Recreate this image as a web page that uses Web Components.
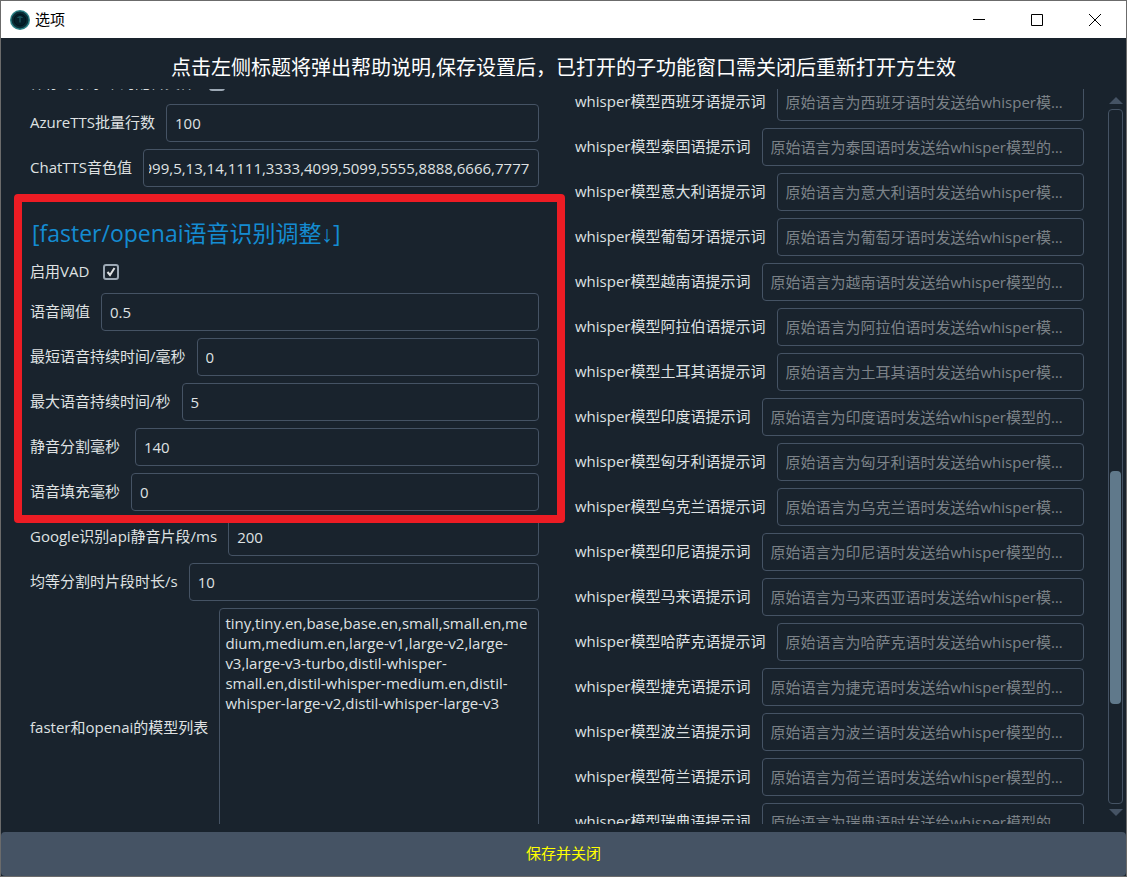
<!DOCTYPE html>
<html lang="zh-CN">
<head>
<meta charset="utf-8">
<title>选项</title>
<style>
  html, body {
    height: 100%;
    margin: 0;
  }
  body {
    --bg: #19232d;
    --line: #455364;
    --text: #dfe1e2;
    --muted: #7c8288;
    --accent: #148cd2;
    font: 15px/20px "Open Sans", "Liberation Sans", "Noto Sans CJK SC", sans-serif;
    color: var(--text);
    background: var(--bg);
  }
</style>
</head>
<body>

<option-window title-text="选项">
  <option-scroll>
    <option-column style="--skip: 20px">
      <option-check label="保存每条字幕的配音文件"></option-check>
      <option-field label="AzureTTS批量行数" value="100"></option-field>
      <option-field label="ChatTTS音色值" value="11,12,16,2222,4444,6653,7869,9999,5,13,14,1111,3333,4099,5099,5555,8888,6666,7777" to-end></option-field>
      <option-group heading="[faster/openai语音识别调整↓]">
        <option-check label="启用VAD" checked></option-check>
        <option-field label="语音阈值" value="0.5"></option-field>
        <option-field label="最短语音持续时间/毫秒" value="0"></option-field>
        <option-field label="最大语音持续时间/秒" value="5"></option-field>
        <option-field label="静音分割毫秒 " value="140"></option-field>
        <option-field label="语音填充毫秒" value="0"></option-field>
      </option-group>
      <option-field label="Google识别api静音片段/ms" value="200"></option-field>
      <option-field label="均等分割时片段时长/s" value="10"></option-field>
      <option-field label="faster和openai的模型列表" multiline value="tiny,tiny.en,base,base.en,small,small.en,medium,medium.en,large-v1,large-v2,large-v3,large-v3-turbo,distil-whisper-small.en,distil-whisper-medium.en,distil-whisper-large-v2,distil-whisper-large-v3"></option-field>
    </option-column>
    <option-column id="prompts" style="--skip: 6px"></option-column>
  </option-scroll>
</option-window>

<script>
// Window frame: title bar, hint line, content slot and the save button
class OptionWindow extends HTMLElement {
  constructor() {
    super();
    this.shadow = this.attachShadow({ mode: 'open' });
    this.shadow.innerHTML = `
      <style>
        :host {
          display: flex;
          flex-direction: column;
          height: 100vh;
          box-sizing: border-box;
          border: 1px solid #6b6b6b;
          overflow: hidden;
        }
        header {
          display: flex;
          align-items: center;
          gap: 5px;
          height: 37px;
          flex: none;
          padding: 0 2px 0 9px;
          background: #fff;
          color: #000;
        }
        header span {
          flex: 1;
          padding-bottom: 2px;
        }
        header button {
          display: grid;
          place-items: center;
          width: 58px;
          height: 35px;
          padding: 0;
          border: 0;
          background: none;
        }
        .controls {
          display: flex;
        }
        h1 {
          flex: none;
          margin: 0;
          padding: 16px 0 7px;
          font-size: 20px;
          line-height: 28px;
          font-weight: 400;
          text-align: center;
          color: #fff;
        }
        .save {
          flex: none;
          height: 44px;
          margin-top: 8px;
          padding: 0 0 2px;
          border: 0;
          border-radius: 4px;
          background: var(--line);
          color: #ff0;
          font: inherit;
        }
      </style>
      <header>
        <svg width="20" height="20" viewBox="0 0 20 20">
          <circle cx="10" cy="10" r="10" fill="#2a8085"/>
          <circle cx="10" cy="10" r="8.500" fill="#0a2f38"/>
          <circle cx="10" cy="10" r="6" fill="#04202a" stroke="#02141b"/>
          <path d="M7.500 7.500q2.500-1.500 5 0M10 7v5.500" fill="none" stroke="#23696e"/>
        </svg>
        <span></span>
        <div class="controls">
          <button aria-label="最小化"><svg width="12" height="12"><path d="M0 5.500h12" stroke="#000"/></svg></button>
          <button aria-label="最大化"><svg width="12" height="12"><path d="M.5.500h11v11h-11z" fill="none" stroke="#000"/></svg></button>
          <button aria-label="关闭"><svg width="12" height="12"><path d="M0 0l12 12M12 0L0 12" stroke="#000"/></svg></button>
        </div>
      </header>
      <h1>点击左侧标题将弹出帮助说明,保存设置后，已打开的子功能窗口需关闭后重新打开方生效</h1>
      <slot></slot>
      <button class="save">保存并关闭</button>
    `;
  }

  connectedCallback() {
    this.shadow.querySelector('header span').textContent = this.getAttribute('title-text');
  }
}

// Two columns with the scroll bar at the right
class OptionScroll extends HTMLElement {
  constructor() {
    super();
    this.shadow = this.attachShadow({ mode: 'open' });
    this.shadow.innerHTML = `
      <style>
        :host {
          display: flex;
          flex: 1;
          min-height: 0;
          gap: 24px;
          padding: 0 3px 0 29px;
          overflow: hidden;
        }
        .columns {
          flex: 1;
          display: grid;
          grid-template-columns: 1fr 1fr;
          align-items: start;
          gap: 36px;
          min-width: 0;
        }
        .bar {
          display: flex;
          flex-direction: column;
          align-items: center;
          gap: 5px;
          width: 15px;
          padding: 8px 0;
        }
        svg {
          flex: none;
          fill: var(--line);
        }
        .track {
          flex: 1;
          display: grid;
          grid-template-rows: 361fr 233fr 99fr;
          width: 100%;
          box-sizing: border-box;
          border: 1px solid var(--line);
          border-radius: 4px;
        }
        .thumb {
          grid-row: 2;
          margin: 0 1px;
          border-radius: 4px;
          background: #60798b;
        }
      </style>
      <div class="columns"><slot></slot></div>
      <div class="bar">
        <svg width="14" height="7"><path d="M0 7l7-7 7 7z"/></svg>
        <div class="track"><div class="thumb"></div></div>
        <svg width="14" height="7"><path d="M0 0l7 7 7-7z"/></svg>
      </div>
    `;
  }
}

class OptionColumn extends HTMLElement {
  constructor() {
    super();
    this.shadow = this.attachShadow({ mode: 'open' });
    // --skip is how far the column is scrolled into its first row
    this.shadow.innerHTML = `
      <style>
        :host {
          display: flex;
          flex-direction: column;
          gap: 7px;
          min-width: 0;
          margin-top: calc(0px - var(--skip));
        }
      </style>
      <slot></slot>
    `;
  }
}

// Titled block with a red frame drawn over the rows
class OptionGroup extends HTMLElement {
  constructor() {
    super();
    this.shadow = this.attachShadow({ mode: 'open' });
    this.shadow.innerHTML = `
      <style>
        :host {
          position: relative;
          display: flex;
          flex-direction: column;
          gap: 7px;
        }
        :host::after {
          content: "";
          position: absolute;
          inset: 0 -26px -12px -16px;
          z-index: 1;
          border: 8px solid #ed1c24;
          border-radius: 4px;
          pointer-events: none;
        }
        h2 {
          margin: 0;
          padding: 23px 0 2px 2px;
          font-size: 23px;
          line-height: 32px;
          font-weight: 400;
          color: var(--accent);
        }
      </style>
      <h2></h2>
      <slot></slot>
    `;
  }

  connectedCallback() {
    this.shadow.querySelector('h2').textContent = this.getAttribute('heading');
  }
}

class OptionField extends HTMLElement {
  connectedCallback() {
    this.shadow = this.attachShadow({ mode: 'open' });
    const multiline = this.hasAttribute('multiline');
    this.shadow.innerHTML = `
      <style>
        :host {
          display: flex;
          align-items: center;
          gap: 11px;
        }
        label {
          flex: none;
          padding-bottom: 2px;
          white-space: pre;
        }
        input, textarea {
          flex: 1;
          min-width: 0;
          box-sizing: border-box;
          border: 1px solid var(--line);
          border-radius: 4px;
          outline: 0;
          background: var(--bg);
          color: inherit;
          font: inherit;
        }
        input {
          height: 38px;
          padding: 0 8px;
          text-overflow: ellipsis;
        }
        :host([to-end]) input {
          padding: 0 9px 0 5px;
          text-overflow: clip;
        }
        textarea {
          height: 240px;
          padding: 4px 5px;
          resize: none;
          overflow: hidden;
        }
        ::placeholder {
          color: var(--muted);
          opacity: 1;
        }
      </style>
      <label for="control"></label>
      ${multiline ? '<textarea id="control"></textarea>' : '<input id="control" type="text">'}
    `;
    this.shadow.querySelector('label').textContent = this.getAttribute('label');
    const control = this.shadow.getElementById('control');
    control.value = this.getAttribute('value') || '';
    if (this.hasAttribute('placeholder')) {
      control.placeholder = this.getAttribute('placeholder');
    }
    if (this.hasAttribute('to-end')) {
      requestAnimationFrame(() => { control.scrollLeft = control.scrollWidth; });
    }
  }
}

class OptionCheck extends HTMLElement {
  connectedCallback() {
    this.shadow = this.attachShadow({ mode: 'open' });
    this.shadow.innerHTML = `
      <style>
        :host {
          display: flex;
          align-items: center;
          gap: 14px;
          height: 28px;
        }
        label {
          padding-bottom: 2px;
        }
        .box {
          display: grid;
        }
        input, svg {
          grid-area: 1 / 1;
        }
        input {
          appearance: none;
          width: 16px;
          height: 16px;
          margin: 0;
          border: 2px solid #9da9b5;
          border-radius: 3px;
        }
        svg {
          fill: none;
          stroke: #dfe1e2;
          stroke-width: 2;
          pointer-events: none;
        }
        input:not(:checked) + svg {
          display: none;
        }
      </style>
      <label for="control"></label>
      <div class="box">
        <input id="control" type="checkbox">
        <svg width="16" height="16"><path d="M4.500 8l2.500 3 4.500-7"/></svg>
      </div>
    `;
    this.shadow.querySelector('label').textContent = this.getAttribute('label');
    this.shadow.getElementById('control').checked = this.hasAttribute('checked');
  }
}

// [name in the label, name in the placeholder]
const languages = [
  ['西班牙语'], ['泰国语'], ['意大利语'], ['葡萄牙语'], ['越南语'], ['阿拉伯语'],
  ['土耳其语'], ['印度语'], ['匈牙利语'], ['乌克兰语'], ['印尼语'],
  ['马来语', '马来西亚语'], ['哈萨克语'], ['捷克语'], ['波兰语'], ['荷兰语'], ['瑞典语']
];
const prompts = document.getElementById('prompts');
languages.forEach(([name, full = name]) => {
  const field = document.createElement('option-field');
  field.setAttribute('label', `whisper模型${name}提示词`);
  field.setAttribute('placeholder', `原始语言为${full}时发送给whisper模型的提示词`);
  prompts.append(field);
});

customElements.define('option-window', OptionWindow);
customElements.define('option-scroll', OptionScroll);
customElements.define('option-column', OptionColumn);
customElements.define('option-group', OptionGroup);
customElements.define('option-field', OptionField);
customElements.define('option-check', OptionCheck);
</script>
</body>
</html>
